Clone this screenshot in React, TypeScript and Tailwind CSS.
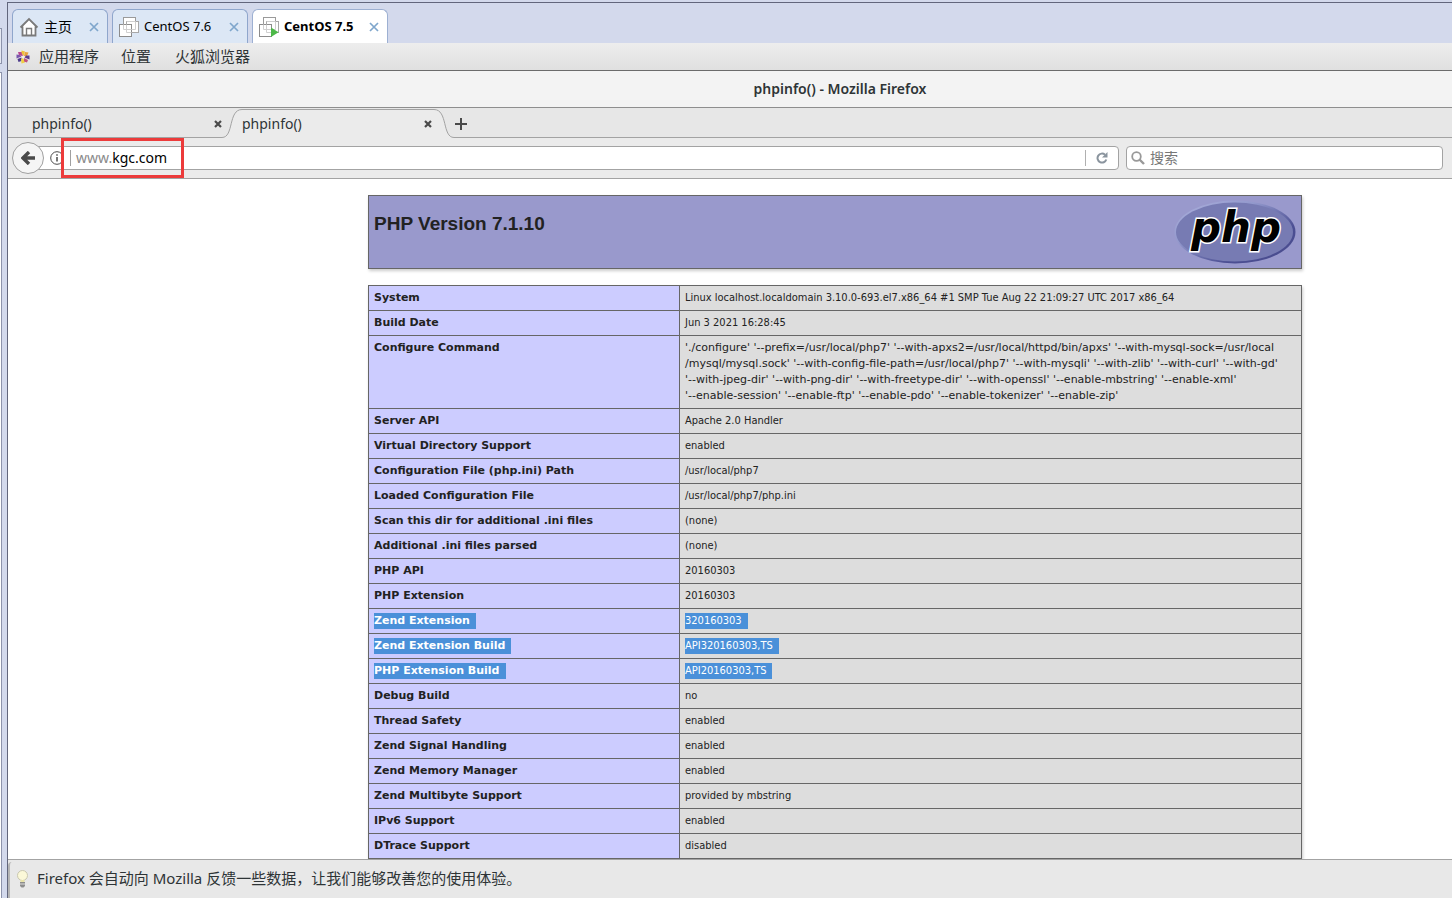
import type { ReactNode } from "react";

const UI = "font-['Noto_Sans','Noto_Sans_CJK_SC',sans-serif]";

type Row = { name: string; value: string[]; selected?: boolean };

const rows: Row[] = [
  { name: "System", value: ["Linux localhost.localdomain 3.10.0-693.el7.x86_64 #1 SMP Tue Aug 22 21:09:27 UTC 2017 x86_64"] },
  { name: "Build Date", value: ["Jun 3 2021 16:28:45"] },
  {
    name: "Configure Command",
    value: [
      "'./configure' '--prefix=/usr/local/php7' '--with-apxs2=/usr/local/httpd/bin/apxs' '--with-mysql-sock=/usr/local",
      "/mysql/mysql.sock' '--with-config-file-path=/usr/local/php7' '--with-mysqli' '--with-zlib' '--with-curl' '--with-gd'",
      "'--with-jpeg-dir' '--with-png-dir' '--with-freetype-dir' '--with-openssl' '--enable-mbstring' '--enable-xml'",
      "'--enable-session' '--enable-ftp' '--enable-pdo' '--enable-tokenizer' '--enable-zip'",
    ],
  },
  { name: "Server API", value: ["Apache 2.0 Handler"] },
  { name: "Virtual Directory Support", value: ["enabled"] },
  { name: "Configuration File (php.ini) Path", value: ["/usr/local/php7"] },
  { name: "Loaded Configuration File", value: ["/usr/local/php7/php.ini"] },
  { name: "Scan this dir for additional .ini files", value: ["(none)"] },
  { name: "Additional .ini files parsed", value: ["(none)"] },
  { name: "PHP API", value: ["20160303"] },
  { name: "PHP Extension", value: ["20160303"] },
  { name: "Zend Extension", value: ["320160303"], selected: true },
  { name: "Zend Extension Build", value: ["API320160303,TS"], selected: true },
  { name: "PHP Extension Build", value: ["API20160303,TS"], selected: true },
  { name: "Debug Build", value: ["no"] },
  { name: "Thread Safety", value: ["enabled"] },
  { name: "Zend Signal Handling", value: ["enabled"] },
  { name: "Zend Memory Manager", value: ["enabled"] },
  { name: "Zend Multibyte Support", value: ["provided by mbstring"] },
  { name: "IPv6 Support", value: ["enabled"] },
  { name: "DTrace Support", value: ["disabled"] },
];

function HomeIcon() {
  return (
    <svg width="20" height="20" viewBox="0 0 20 20" fill="none" aria-hidden="true">
      <path d="M3.5 9.5V18.5H16.5V9.5L10 3Z" fill="#fff" />
      <path d="M1.5 10.500 10 2l8.500 8.500M3.500 9.500v9h13v-9" stroke="#7a7a7a" strokeWidth="1.800" />
      <path d="M7.500 18.500v-7h5v7" stroke="#7a7a7a" strokeWidth="1.400" />
    </svg>
  );
}

function MachineIcon({ running = false }: { running?: boolean }) {
  return (
    <svg width="20" height="20" viewBox="0 0 20 20" fill="none" aria-hidden="true">
      <rect x="4.500" y=".5" width="12" height="12" fill="#fff" stroke="#9a9a9a" />
      <rect x="7.500" y="4.500" width="12" height="11" fill="#fff" stroke="#a8a8a8" />
      <rect x=".5" y="7.500" width="12" height="12" fill="#fff" stroke="#8c8c8c" />
      <path d="M4.500 7.500v5h8M7.500 7.500v8h5M7.500 4.500h9v8h-4" stroke="#d0d0d0" />
      {running && <path d="M12 10.500v9.500l7.500-4.750Z" fill="#4cb848" />}
    </svg>
  );
}

function CloseX() {
  return (
    <svg width="10" height="10" viewBox="0 0 10 10" aria-hidden="true">
      <path d="M1 1l8 8M9 1l-8 8" stroke="#7fa6cc" strokeWidth="1.700" />
    </svg>
  );
}

function TabClose() {
  return (
    <svg width="8" height="8" viewBox="0 0 8 8" aria-hidden="true">
      <path d="M1 1l6 6M7 1l-6 6" stroke="#4a4a4a" strokeWidth="2.200" />
    </svg>
  );
}

function AppsIcon() {
  return (
    <svg width="14" height="14" viewBox="0 0 14 14" aria-hidden="true">
      <path d="M2 2h4l1 4-4-.5Z" fill="#b8478f" />
      <path d="M5.500.5 9 1.500 7.500 6 5.500 3Z" fill="#eec23a" />
      <path d="M9 2l3.500.5L11 6 8 6Z" fill="#e9a23c" />
      <path d="M13.500 5.500v4L8.500 7.500 10 5.500Z" fill="#5b3a8c" />
      <path d="M.5 4.500v4L5.500 6.500 3.500 5Z" fill="#7a55ad" />
      <path d="M1.500 9 5.500 7.500 5.500 11 2.500 12Z" fill="#4c3a8a" />
      <path d="M5 9l2-1 2 4.500-3.500 1Z" fill="#efd043" />
      <path d="M8 8l4 2-1 2.500-3-1Z" fill="#c2537c" />
      <circle cx="7" cy="7" r="1.300" fill="#f4efe6" />
    </svg>
  );
}

function PhpLogo() {
  return (
    <svg width="122" height="64" viewBox="0 0 122 64" role="img" aria-label="PHP logo">
      <defs>
        <linearGradient id="rim" x1="0" y1="0" x2="1" y2="1">
          <stop offset="0" stopColor="#aeb2dd" />
          <stop offset=".35" stopColor="#9298cc" />
          <stop offset=".7" stopColor="#4c4f93" />
          <stop offset="1" stopColor="#484a8c" />
        </linearGradient>
      </defs>
      <ellipse cx="61" cy="32" rx="60.500" ry="31.500" fill="url(#rim)" />
      <ellipse cx="60.500" cy="32" rx="58.500" ry="29.500" fill="#777bb3" />
      <text
        x="62"
        y="42"
        textAnchor="middle"
        fontFamily="DejaVu Sans"
        fontWeight="700"
        fontStyle="italic"
        fontSize="42"
        fill="#000"
        stroke="#fff"
        strokeWidth="3"
        paintOrder="stroke"
      >
        php
      </text>
    </svg>
  );
}

function VmTab({ icon, label, active = false, className = "" }: { icon: ReactNode; label: string; active?: boolean; className?: string }) {
  return (
    <div
      className={`flex items-center gap-[5px] rounded-t-md border border-b-0 pl-1.5 pr-2 ${
        active ? "border-[#9db0d2] bg-white font-bold" : "border-[#8fa6cc] bg-[#dce7f5]"
      } ${className}`}
    >
      {icon}
      <button type="button" role="tab" aria-selected={active} className="flex-1 whitespace-nowrap text-left">
        {label}
      </button>
      <button type="button" aria-label={`关闭 ${label}`}>
        <CloseX />
      </button>
    </div>
  );
}

function Cell({ text, selected }: { text: string; selected?: boolean }) {
  return selected ? <span className="inline-block bg-[#4a90d9] pr-1.5 text-white">{text}</span> : <>{text}</>;
}

export default function App() {
  return (
    <div className={`flex h-screen overflow-hidden bg-[#d3d9ec] text-sm text-[#2e3436] ${UI}`}>
      <div className="flex w-[7px] shrink-0 flex-col">
        <div className="mt-7 h-9 w-0.5 border-y border-r border-[#8d93ab] bg-[#e6e9f3]" />
        <div className="mt-2 w-0.5 flex-1 border-r border-t border-[#8d93ab] bg-white" />
      </div>

      <div className="mt-0.5 flex min-w-0 flex-1 flex-col border-l border-t border-[#62667c]">
        <div role="tablist" aria-label="虚拟机" className="flex h-10 shrink-0 gap-1 bg-[#d3d9ec] pb-0.5 pl-1 pt-1.5 text-[13px] text-black">
          <VmTab className="-mb-0.5 w-24 text-sm" icon={<HomeIcon />} label="主页" />
          <VmTab className="-mb-0.5 w-[136px]" icon={<MachineIcon />} label="CentOS 7.6" />
          <VmTab className="-mb-0.5 w-[136px]" icon={<MachineIcon running />} label="CentOS 7.5" active />
        </div>

        <nav aria-label="应用程序" className="flex h-7 shrink-0 items-center border-b border-[#6b6b6b] bg-linear-to-b from-[#ededed] to-[#e0e0e0] pl-2 text-[15px]">
          <AppsIcon />
          <button type="button" className="ml-[9px]">应用程序</button>
          <button type="button" className="ml-[22px]">位置</button>
          <button type="button" className="ml-6">火狐浏览器</button>
        </nav>

        <header className="flex h-[37px] shrink-0 items-center justify-center border-b border-[#8e8e8e] bg-[#f3f3f3] pl-[220px]">
          <h1 className="font-semibold">phpinfo() - Mozilla Firefox</h1>
        </header>

        <div className="flex h-[30px] shrink-0 bg-[#e7e7e7]">
          <div className="flex w-[214px] items-center justify-between border-b border-[#a3a3a3] pl-6 pt-0.5">
            <button type="button">phpinfo()</button>
            <button type="button" aria-label="关闭标签页">
              <TabClose />
            </button>
          </div>
          <svg width="20" height="30" viewBox="0 0 20 30" fill="none" aria-hidden="true">
            <path d="M0 29.500C12 29.500 6 1.500 20 1.500V30H0Z" fill="#ebebeb" />
            <path d="M0 29.500C12 29.500 6 1.500 20 1.500" stroke="#a3a3a3" />
          </svg>
          <div className="mt-px flex w-[192px] items-center justify-between border-t border-[#a3a3a3] bg-[#ebebeb] pr-0.5">
            <button type="button">phpinfo()</button>
            <button type="button" aria-label="关闭标签页">
              <TabClose />
            </button>
          </div>
          <svg width="20" height="30" viewBox="0 0 20 30" fill="none" aria-hidden="true">
            <path d="M20 29.500C8 29.500 14 1.500 0 1.500V30H20Z" fill="#ebebeb" />
            <path d="M20 29.500C8 29.500 14 1.500 0 1.500" stroke="#a3a3a3" />
          </svg>
          <div className="flex flex-1 items-center border-b border-[#a3a3a3] pl-px pt-0.5">
            <button type="button" aria-label="新建标签页">
              <svg width="12" height="12" viewBox="0 0 12 12" aria-hidden="true">
                <path d="M6 0v12M0 6h12" stroke="#4a4a4a" strokeWidth="2" />
              </svg>
            </button>
          </div>
        </div>

        <div className="flex h-[41px] shrink-0 items-center border-b border-[#a3a3a3] bg-[#ebebeb] pl-1 pr-[9px]">
          <button
            type="button"
            aria-label="后退"
            className="z-10 flex size-8 shrink-0 items-center justify-center rounded-full border border-[#a0a0a0] bg-[#f5f5f5]"
          >
            <svg width="14" height="14" viewBox="0 0 14 14" fill="none" aria-hidden="true">
              <path d="M8 1L2 7l6 6M2.500 7H14" stroke="#4a4a4a" strokeWidth="3.400" />
            </svg>
          </button>
          <div className="relative -ml-2 flex h-6 flex-1 items-center rounded-r-sm border border-[#a3a3a3] bg-white pl-[13px]">
            <svg width="14" height="14" viewBox="0 0 14 14" fill="none" aria-hidden="true">
              <circle cx="7" cy="7" r="6.300" stroke="#4a4a4a" />
              <path d="M7 6v4.500M7 3.300v1.500" stroke="#4a4a4a" strokeWidth="1.500" />
            </svg>
            <span className="ml-1.5 h-4 w-px bg-[#a0a0a0]" />
            <button type="button" className="ml-[5px] flex-1 cursor-text text-left text-black">
              <span className="text-[#8a8a8a]">www.</span>kgc.com
            </button>
            <span className="h-4 w-px bg-[#b0b0b0]" />
            <button type="button" aria-label="重新载入" className="flex w-8 justify-center">
              <svg width="12" height="12" viewBox="0 0 12 12" fill="none" aria-hidden="true">
                <path d="M10.300 7.500A4.500 4.500 0 1 1 9 2.700" stroke="#8a949e" strokeWidth="2" />
                <path d="M11.500 0v5.500H6Z" fill="#8a949e" />
              </svg>
            </button>
            <div className="pointer-events-none absolute -top-[9px] left-6 h-10 w-[123px] border-3 border-[#ec3b3b]" />
          </div>
          <label className="ml-[7px] flex h-6 w-[317px] shrink-0 items-center gap-[5px] rounded-sm border border-[#a3a3a3] bg-white pl-1">
            <svg width="14" height="14" viewBox="0 0 14 14" fill="none" aria-hidden="true">
              <circle cx="5.500" cy="5.500" r="4.300" stroke="#999" strokeWidth="1.800" />
              <path d="M8.500 8.500l4.500 4.500" stroke="#999" strokeWidth="2.400" />
            </svg>
            <input type="search" aria-label="搜索" placeholder="搜索" className="min-w-0 flex-1 outline-none placeholder:text-[#777]" />
          </label>
        </div>

        <main className="min-h-0 flex-1 overflow-hidden bg-white pl-[360px] pr-[150px] pt-4 font-['DejaVu_Sans',sans-serif] text-[#222]">
          <div className="mb-4 flex h-[74px] justify-between border border-[#666] bg-[#9999cc] px-[5px] pt-1 shadow-[1px_2px_3px_#ccc]">
            <h2 className="pt-3 font-['Liberation_Sans',sans-serif] text-[19px]/6 font-bold">PHP Version 7.1.10</h2>
            <PhpLogo />
          </div>
          <table className="w-full table-fixed border-collapse text-[11px]/4 shadow-[1px_2px_3px_#ccc]">
            <colgroup>
              <col className="w-[311px]" />
              <col />
            </colgroup>
            <tbody>
              {rows.map((row) => (
                <tr key={row.name}>
                  <th scope="row" className="border border-[#666] bg-[#ccccff] px-[5px] py-1 text-left align-top font-bold">
                    <Cell text={row.name} selected={row.selected} />
                  </th>
                  <td
                    className={`whitespace-nowrap border border-[#666] bg-[#dddddd] px-[5px] py-1 align-top ${
                      row.value.length > 1 ? "" : "font-['DejaVu_Sans_Condensed','DejaVu_Sans',sans-serif]"
                    }`}
                  >
                    {row.value.map((line) => (
                      <div key={line}>
                        <Cell text={line} selected={row.selected} />
                      </div>
                    ))}
                  </td>
                </tr>
              ))}
            </tbody>
          </table>
        </main>

        <footer className="flex h-[39px] shrink-0 border-t border-[#a3a3a3] bg-[#e8e8e8] pt-0.5">
          <div className="flex w-full items-center gap-2 rounded-tl-sm border-l-2 border-[#b5b5b5] pb-0.5 pl-1.5 text-[15px]">
            <svg width="13" height="18" viewBox="0 0 13 18" aria-hidden="true">
              <circle cx="6.500" cy="5.500" r="5" fill="#fbf8d8" stroke="#c9c7b0" />
              <path d="M4.500 10h4v3h-4Z" fill="#e8e3a8" />
              <path d="M4 12h5v4l-1.500 1.500h-2L4 16Z" fill="#8d8d8d" />
              <path d="M4 14h5" stroke="#ddd" />
            </svg>
            <p>Firefox 会自动向 Mozilla 反馈一些数据，让我们能够改善您的使用体验。</p>
          </div>
        </footer>
      </div>
    </div>
  );
}
